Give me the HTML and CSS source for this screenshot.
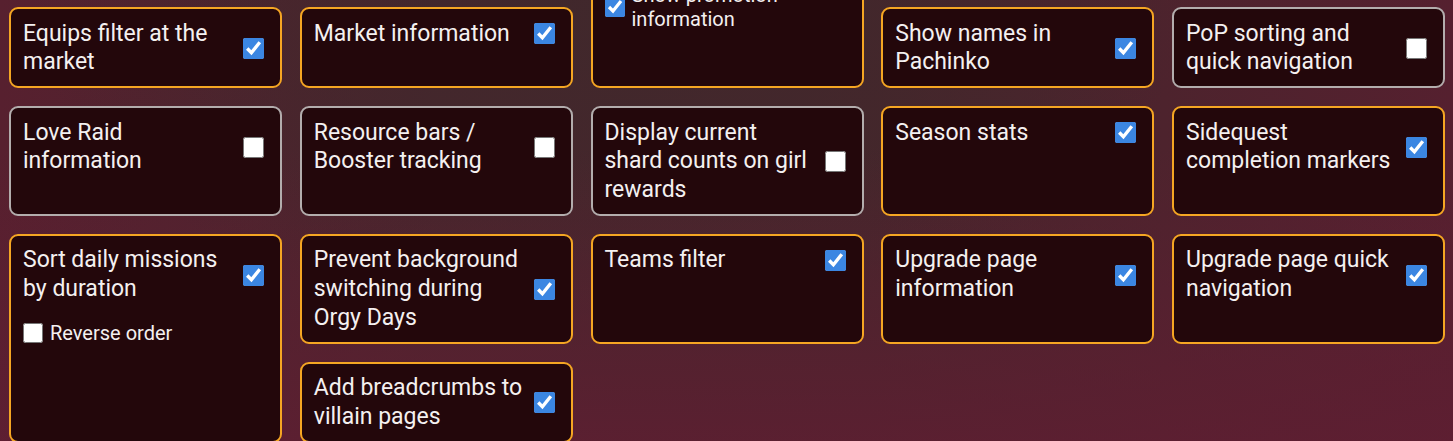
FILE: index.html
```html
<!DOCTYPE html>
<html lang="en">
<head>
<meta charset="utf-8">
<title>Settings</title>
<link rel="stylesheet" href="styles.css">
</head>
<body>
<div class="page">
  <div class="grid">
    <!-- row above the scrolled viewport -->
    <div class="card on">
      <label class="opt"><span class="opt-text">Home screen</span><input type="checkbox" checked></label>
      <label class="sub"><input type="checkbox" checked><span>Hide game links</span></label>
    </div>
    <div class="card on">
      <label class="opt"><span class="opt-text">Harem information and filters</span><input type="checkbox" checked></label>
    </div>
    <div class="card on span2">
      <label class="opt"><span class="opt-text">Champions information</span><input type="checkbox" checked></label>
      <label class="sub"><input type="checkbox" checked><span>Show promotion information</span></label>
    </div>
    <div class="card on">
      <label class="opt"><span class="opt-text">League information</span><input type="checkbox" checked></label>
    </div>
    <div class="card on">
      <label class="opt"><span class="opt-text">Fight simulator</span><input type="checkbox" checked></label>
    </div>

    <div class="card on">
      <label class="opt"><span class="opt-text">Equips filter at the market</span><input type="checkbox" checked></label>
    </div>
    <div class="card on">
      <label class="opt"><span class="opt-text">Market information</span><input type="checkbox" checked></label>
    </div>
    <div class="card on">
      <label class="opt"><span class="opt-text">Show names in Pachinko</span><input type="checkbox" checked></label>
    </div>
    <div class="card off">
      <label class="opt"><span class="opt-text">PoP sorting and quick navigation</span><input type="checkbox"></label>
    </div>

    <div class="card off">
      <label class="opt"><span class="opt-text">Love Raid information</span><input type="checkbox"></label>
    </div>
    <div class="card off">
      <label class="opt"><span class="opt-text">Resource bars / Booster tracking</span><input type="checkbox"></label>
    </div>
    <div class="card off">
      <label class="opt"><span class="opt-text">Display current shard counts on girl rewards</span><input type="checkbox"></label>
    </div>
    <div class="card on">
      <label class="opt"><span class="opt-text">Season stats</span><input type="checkbox" checked></label>
    </div>
    <div class="card on">
      <label class="opt"><span class="opt-text">Sidequest completion markers</span><input type="checkbox" checked></label>
    </div>

    <div class="card on span2">
      <label class="opt"><span class="opt-text">Sort daily missions by duration</span><input type="checkbox" checked></label>
      <label class="sub"><input type="checkbox"><span>Reverse order</span></label>
    </div>
    <div class="card on">
      <label class="opt"><span class="opt-text">Prevent background switching during Orgy Days</span><input type="checkbox" checked></label>
    </div>
    <div class="card on">
      <label class="opt"><span class="opt-text">Teams filter</span><input type="checkbox" checked></label>
    </div>
    <div class="card on">
      <label class="opt"><span class="opt-text">Upgrade page information</span><input type="checkbox" checked></label>
    </div>
    <div class="card on">
      <label class="opt"><span class="opt-text">Upgrade page quick navigation</span><input type="checkbox" checked></label>
    </div>

    <div class="card on">
      <label class="opt"><span class="opt-text">Add breadcrumbs to villain pages</span><input type="checkbox" checked></label>
    </div>
  </div>
</div>
</body>
</html>
```

FILE: styles.css
```css
html, body {
  margin: 0;
  height: 441px;
  overflow: hidden;
}
body {
  font-family: Roboto, "Liberation Sans", sans-serif;
  color: #f4f0f0;
  background:
    radial-gradient(ellipse 40% 75% at 42% 0%, rgba(64, 40, 44, 0.9) 0%, rgba(64, 40, 44, 0) 100%),
    linear-gradient(90deg, #57202f 0%, #47262c 30%, #45262b 60%, #55202f 100%);
  background-color: #5a1f31;
}
.page {
  padding: 0 8px 0 9px;
  margin-top: -104.5px;
  background: linear-gradient(180deg, rgba(92, 31, 49, 0) 0%, rgba(92, 31, 49, 0) 45%, rgba(95, 30, 50, 0.85) 100%);
  min-height: 560px;
}
.grid {
  display: grid;
  grid-template-columns: repeat(5, 1fr);
  gap: 17.75px;
}
.card {
  background: #23070b;
  border: 2px solid #b3adad;
  border-radius: 9px;
  padding: 10.5px 12px 9.25px;
  display: flex;
  flex-direction: column;
}
.card.on {
  border-color: #f5a623;
}
.span2 {
  grid-row: span 2;
}
.opt {
  display: flex;
  align-items: center;
  font-size: 23px;
  line-height: 28.75px;
}
.opt-text {
  flex: 1;
}
.opt input {
  flex: none;
  width: 21px;
  height: 21px;
  margin: 0 4px 0 10px;
  accent-color: #3b86e2;
}
.sub {
  display: flex;
  align-items: center;
  gap: 7px;
  margin-top: 17.25px;
  font-size: 20px;
  line-height: 24px;
}
.sub input {
  width: 20px;
  height: 20px;
  margin: 0;
  flex: none;
  accent-color: #3b86e2;
}
```
